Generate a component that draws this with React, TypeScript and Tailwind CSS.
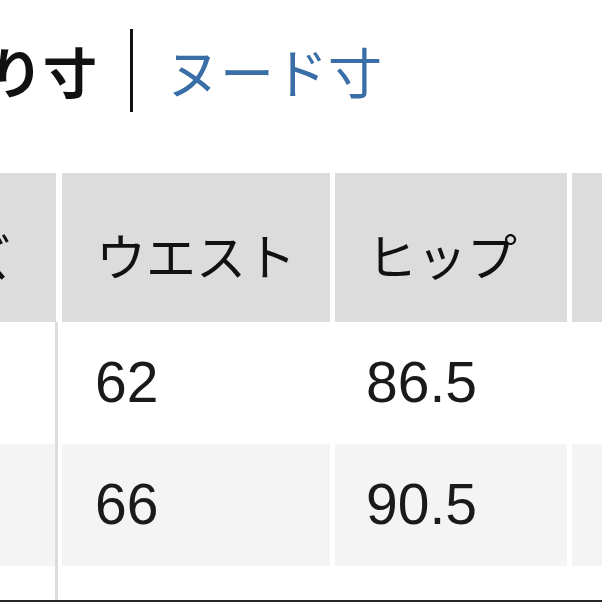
import React from "react";

const jp = { fontFamily: '"Noto Sans CJK JP", "Noto Sans", sans-serif' };
const num = { fontFamily: '"Liberation Sans", Arial, sans-serif' };

function BodyRow({ a, b, shaded }: { a: string; b: string; shaded: boolean }) {
  const bg = shaded ? "bg-[#f4f4f4]" : "bg-white";
  return (
    <div className="flex h-[122px] shrink-0">
      <div className={`w-[55px] shrink-0 ${bg}`} />
      <div className="w-[3px] shrink-0 bg-[#dcdcdc]" />
      <div className={`ml-[4px] w-[268px] shrink-0 ${bg} flex items-center pl-[33px] text-[57px] text-[#1a1a1a]`} style={num}>
        {a}
      </div>
      <div className={`ml-[5px] w-[232px] shrink-0 ${bg} flex items-center pl-[31px] text-[57px] text-[#1a1a1a]`} style={num}>
        {b}
      </div>
      <div className={`ml-[5px] w-[60px] shrink-0 ${bg}`} />
    </div>
  );
}

export default function App() {
  return (
    <div className="w-[602px] h-[602px] overflow-hidden bg-white flex flex-col">
      <div className="h-[173px] shrink-0 pt-[29px]">
        <div className="flex h-[83px] items-center">
          <div className="w-[130px] shrink-0 h-full flex items-center justify-end pr-[33px] overflow-hidden">
            <span className="whitespace-nowrap text-[54px] font-bold text-[#111] leading-none" style={jp}>
              仕上がり寸
            </span>
          </div>
          <div className="w-[3px] h-full bg-[#111] shrink-0" />
          <span className="ml-[33px] whitespace-nowrap text-[54px] text-[#3a6ea6] leading-none" style={jp}>
            ヌード寸
          </span>
        </div>
      </div>

      <div className="flex h-[149px] shrink-0">
        <div className="w-[56px] shrink-0 bg-[#dcdcdc] flex items-center justify-end pr-[45px] pt-[14px] overflow-hidden">
          <span className="whitespace-nowrap text-[50px] text-[#111] leading-none" style={jp}>サイズ</span>
        </div>
        <div className="ml-[6px] w-[268px] shrink-0 bg-[#dcdcdc] flex items-center pl-[34px] pt-[12px]">
          <span className="whitespace-nowrap text-[50px] text-[#111] leading-none" style={jp}>ウエスト</span>
        </div>
        <div className="ml-[5px] w-[232px] shrink-0 bg-[#dcdcdc] flex items-center pl-[32px] pt-[12px]">
          <span className="whitespace-nowrap text-[50px] text-[#111] leading-none" style={jp}>ヒップ</span>
        </div>
        <div className="ml-[5px] w-[60px] shrink-0 bg-[#dcdcdc]" />
      </div>

      <BodyRow a="62" b="86.5" shaded={false} />
      <BodyRow a="66" b="90.5" shaded={true} />

      <div className="flex h-[34px] shrink-0">
        <div className="w-[55px] shrink-0 bg-white" />
        <div className="w-[3px] shrink-0 bg-[#dcdcdc]" />
        <div className="flex-1 bg-white" />
      </div>
      <div className="h-[2px] shrink-0 bg-[#262626]" />
    </div>
  );
}
